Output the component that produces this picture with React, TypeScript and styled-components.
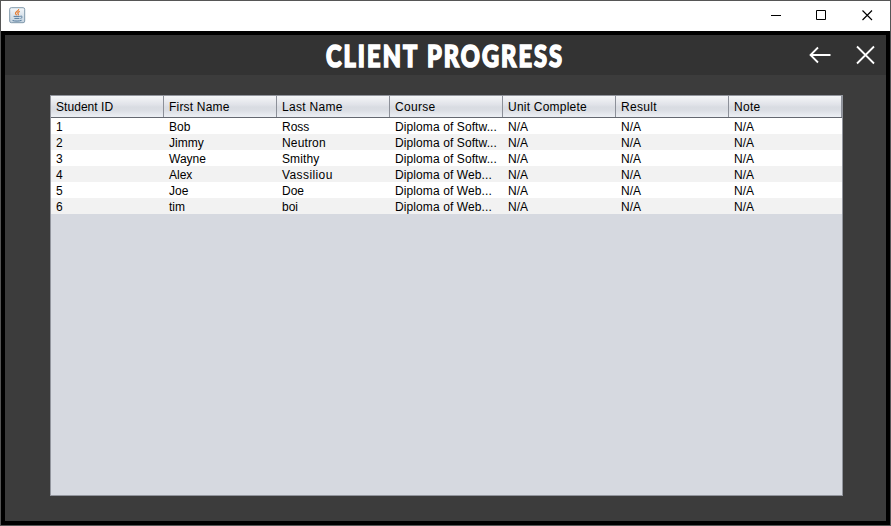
import React from "react";
import styled, { createGlobalStyle } from "styled-components";

const GlobalStyle = createGlobalStyle`
  body { margin: 0; }
  *, *::before, *::after { box-sizing: border-box; }
`;

const Window = styled.div`
  width: 891px;
  height: 526px;
  border: 1px solid #565656;
  display: flex;
  flex-direction: column;
  overflow: hidden;
  background: #000;
  font-family: "Liberation Sans", Arial, sans-serif;
`;

const TitleBar = styled.div`
  height: 30px;
  flex: none;
  background: #fff;
  display: flex;
  justify-content: space-between;
  padding-left: 8px;
  svg { display: block; }
`;

const AppIcon = styled.div`
  padding-top: 6px;
`;

const WindowControls = styled.div`
  display: flex;
`;

const ControlButton = styled.button<{ $width: number }>`
  width: ${(p) => p.$width}px;
  height: 28px;
  border: 0;
  padding: 0;
  background: transparent;
  display: flex;
  align-items: center;
  justify-content: center;
`;

const Frame = styled.div`
  flex: 1;
  border: 4px solid #000;
  background: #3c3c3c;
  display: flex;
  flex-direction: column;
`;

const Header = styled.header`
  height: 40px;
  flex: none;
  background: #333;
  display: grid;
  grid-template-columns: 1fr auto 1fr;
`;

const Heading = styled.h1<{ $scale: number }>`
  grid-column: 2;
  margin: 0 2px 0 0;
  width: 240px;
  display: flex;
  justify-content: center;
  color: #fff;
  font: 900 31px/40px Lato, sans-serif;
  letter-spacing: 2.7px;
  word-spacing: 1px;
  white-space: nowrap;
  -webkit-text-stroke: 1.7px #fff;
  transform: scaleX(${(p) => p.$scale});
`;

const HeaderActions = styled.div`
  display: flex;
  justify-content: flex-end;
  gap: 23px;
  padding: 9px 9px 0 0;
`;

const ActionButton = styled.button`
  width: 23px;
  height: 22px;
  border: 0;
  padding: 0;
  background: transparent;
  svg { display: block; }
`;

const TablePane = styled.div`
  width: 793px;
  height: 401px;
  margin: 20px 0 0 45px;
  border: 1px solid #92959d;
  background: #d6d9e0;
`;

const Row = styled.div<{ $alt?: boolean }>`
  display: grid;
  grid-template-columns: repeat(7, 113px);
  height: 16px;
  background: ${(p) => (p.$alt ? "#f2f2f2" : "#fff")};
`;

const HeaderRow = styled(Row)`
  height: 22px;
  border-bottom: 1px solid #646870;
  background: linear-gradient(#f5f6f8 0, #e0e2e8 9px, #d9dce2 11px, #dadde3 14px, #edf0f5 21px);
`;

const Cell = styled.div<{ $spacing?: number }>`
  padding-left: 5px;
  font-size: 12px;
  line-height: 19px;
  letter-spacing: ${(p) => p.$spacing ?? 0}px;
  white-space: nowrap;
  color: #000;
`;

const HeaderCell = styled(Cell)`
  line-height: 23px;
  height: 21px;
  border-right: 1px solid #8c9099;
`;

const columns: [string, number][] = [
  ["Student ID", 0.05],
  ["First Name", 0.2],
  ["Last Name", 0.3],
  ["Course", 0.3],
  ["Unit Complete", 0.22],
  ["Result", 0.3],
  ["Note", 0.3],
];

const students = [
  ["1", "Bob", "Ross", "Diploma of Softw..."],
  ["2", "Jimmy", "Neutron", "Diploma of Softw..."],
  ["3", "Wayne", "Smithy", "Diploma of Softw..."],
  ["4", "Alex", "Vassiliou", "Diploma of Web..."],
  ["5", "Joe", "Doe", "Diploma of Web..."],
  ["6", "tim", "boi", "Diploma of Web..."],
];

const valueSpacing: Record<string, number> = {
  Vassiliou: 0.4,
  Neutron: 0.15,
  Smithy: 0.1,
  "Diploma of Softw...": 0.1,
  "Diploma of Web...": 0.1,
};

const JavaIcon = () => (
  <svg width="17" height="17" viewBox="0 0 17 17" fill="none">
    <defs>
      <linearGradient id="tile" x2="0" y2="1">
        <stop stopColor="#f4f7fa" />
        <stop offset="1" stopColor="#c3d2df" />
      </linearGradient>
    </defs>
    <rect x=".7" y=".7" width="15" height="15" rx="1.6" fill="url(#tile)" stroke="#7f98ab" />
    <path d="M9.7 2c.5 2-3.8 2.7-3.2 4.6.2.7.9 1.1 1.2 1.7M10.8 4.4c-2.2.9-2.4 1.6-1.6 2.5.4.5.2 1-.3 1.5" stroke="#e57c31" strokeWidth="1.2" />
    <path d="M4.6 9.4h6.2M5.4 11.4h5M3.6 13.5c2 .8 7 .8 9-.2M11.2 9.3c2.4-.7 2.7 1.3.3 2.2" stroke="#557b9d" />
  </svg>
);

export default function App() {
  return (
    <Window>
      <GlobalStyle />
      <TitleBar>
        <AppIcon><JavaIcon /></AppIcon>
        <WindowControls>
          <ControlButton $width={45} aria-label="Minimize">
            <svg width="11" height="11" stroke="#000"><path d="M0 5.5h10" /></svg>
          </ControlButton>
          <ControlButton $width={45} aria-label="Maximize">
            <svg width="11" height="11" stroke="#000" fill="none"><path d="M.5.5h9v9h-9z" /></svg>
          </ControlButton>
          <ControlButton $width={46} aria-label="Close">
            <svg width="11" height="11" stroke="#000" strokeWidth="1.15"><path d="M.5.5l9.5 9.5M10 .5L.5 10" /></svg>
          </ControlButton>
        </WindowControls>
      </TitleBar>
      <Frame>
        <Header>
          <Heading $scale={0.76}>CLIENT PROGRESS</Heading>
          <HeaderActions>
            <ActionButton aria-label="Back">
              <svg width="23" height="22" fill="none" stroke="#fff" strokeWidth="1.8"><path d="M22.5 11H2.5M10 3.5L2.5 11l7.5 7.5" /></svg>
            </ActionButton>
            <ActionButton aria-label="Exit">
              <svg width="23" height="22" fill="none" stroke="#fff" strokeWidth="1.8"><path d="M3 2.5l17 17M20 2.5l-17 17" /></svg>
            </ActionButton>
          </HeaderActions>
        </Header>
        <TablePane>
          <HeaderRow>
            {columns.map(([name, spacing]) => (
              <HeaderCell key={name} $spacing={spacing}>{name}</HeaderCell>
            ))}
          </HeaderRow>
          {students.map((student, i) => (
            <Row key={student[0]} $alt={i % 2 === 1}>
              {[...student, "N/A", "N/A", "N/A"].map((value, j) => (
                <Cell key={j} $spacing={valueSpacing[value]}>{value}</Cell>
              ))}
            </Row>
          ))}
        </TablePane>
      </Frame>
    </Window>
  );
}
